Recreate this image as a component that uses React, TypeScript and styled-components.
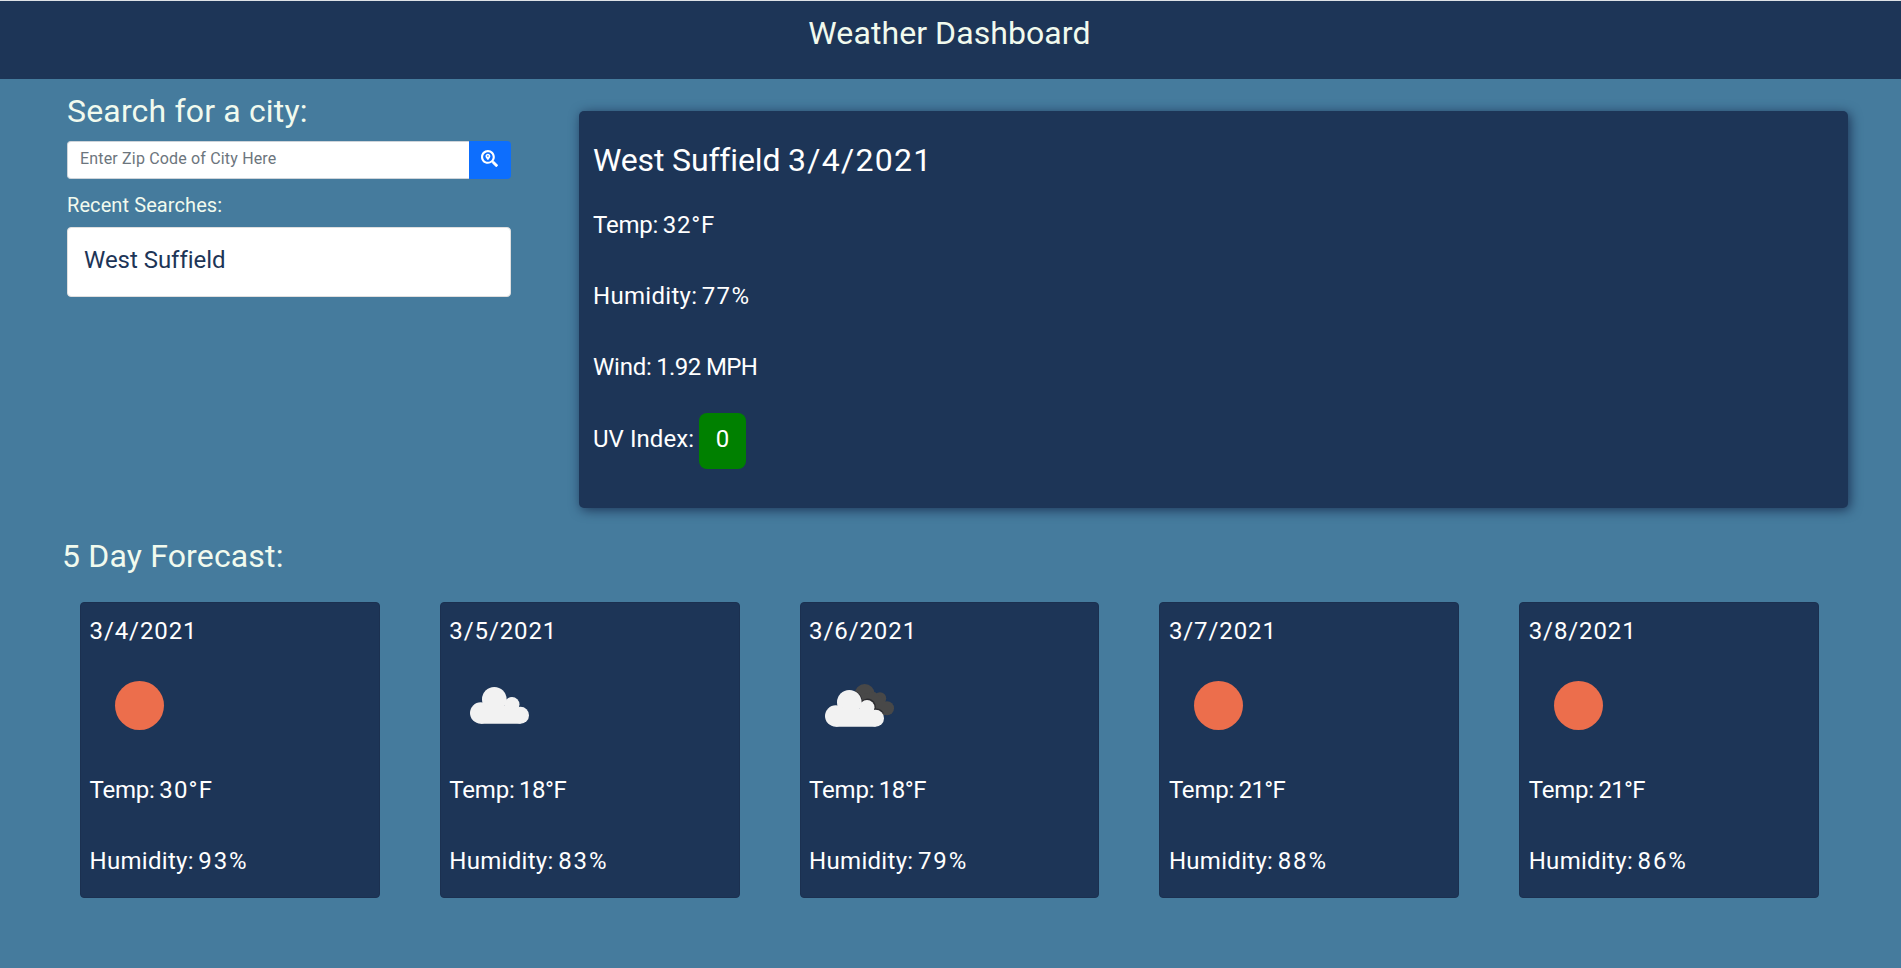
import React from 'react';
import styled, { createGlobalStyle } from 'styled-components';
import { FaSearchLocation } from 'react-icons/fa';

const GlobalStyle = createGlobalStyle`
  *, *::before, *::after { box-sizing: border-box; }
  body {
    margin: 0;
    background: #457b9d;
    color: #f1faee;
    font-family: Roboto, "Liberation Sans", sans-serif;
    font-size: 16px;
  }
  h1, h2, h3, p { margin: 0; font-weight: 400; }
`;

const Page = styled.div`
  min-height: 968px;
  display: flex;
  flex-direction: column;
`;

const Header = styled.header`
  height: 79px;
  padding: 12px 2px 0 0;
  border-top: 1px solid #dee2e6;
  background: #1d3557;
  text-align: center;
`;

const Heading = styled.h2<{ $tracking?: number }>`
  font-size: 32px;
  line-height: 40px;
  letter-spacing: ${(p) => p.$tracking ?? 0}px;
`;

const HeadingDate = styled.span`
  letter-spacing: 1.25px;
`;

const Main = styled.main`
  display: grid;
  grid-template-columns: 444px 1269px;
  column-gap: 68px;
  align-items: start;
  padding: 12px 53px 0 67px;
`;

const SearchForm = styled.form`
  display: flex;
  height: 38px;
  margin: 10px 0 14px;
`;

const SearchInput = styled.input`
  flex: 1;
  min-width: 0;
  padding: 0 12px 3px;
  border: 1px solid #ced4da;
  border-right: 0;
  border-radius: 4px 0 0 4px;
  background: #fff;
  font: inherit;
  letter-spacing: 0.17px;
  outline: 0;
  &::placeholder { color: #6c757d; opacity: 1; }
`;

const SearchButton = styled.button`
  display: flex;
  justify-content: center;
  width: 42px;
  padding: 9px 1px 0 0;
  border: 0;
  border-radius: 0 4px 4px 0;
  background: #0d6efd;
  color: #fff;
  font-size: 17px;
`;

const RecentTitle = styled.h3`
  font-size: 20px;
  line-height: 24px;
  letter-spacing: 0.09px;
`;

const RecentItem = styled.div`
  height: 70px;
  margin-top: 10px;
  padding: 14px 16px;
  border: 1px solid #dfdfdf;
  border-radius: 4px;
  background: #fff;
  color: #1d3557;
  font-size: 24px;
  line-height: 36px;
  letter-spacing: -0.03px;
`;

const CurrentCard = styled.section`
  height: 397px;
  margin-top: 20px;
  padding: 29px 14px 0;
  border-radius: 5px;
  background: #1d3557;
  box-shadow: 2px 2px 12px #1d3557;
  color: #fff;
`;

const CurrentStats = styled.div`
  display: grid;
  grid-auto-rows: 71.33px;
  margin-top: 9px;
`;

const StatRow = styled.p`
  display: flex;
  align-items: center;
  font-size: 24px;
  line-height: 36px;
  white-space: pre;
`;

const StatText = styled.span<{ $tracking?: number }>`
  letter-spacing: ${(p) => p.$tracking ?? 0}px;
  & + & { margin-left: 4.5px; }
`;

const UvBadge = styled.span`
  width: 47px;
  height: 56px;
  margin: 4px 0 0 5px;
  padding-top: 8px;
  border-radius: 8px;
  background: #008000;
  text-align: center;
`;

const ForecastSection = styled.section`
  padding: 28px 52px 0 50px;
`;

const ForecastTitle = styled(Heading)`
  padding-left: 12px;
`;

const ForecastGrid = styled.div`
  display: grid;
  grid-template-columns: repeat(5, 1fr);
  margin-top: 26px;
`;

const DayCard = styled.article`
  height: 296px;
  margin: 0 30px;
  padding: 10px 8px 0 8.5px;
  border: 1px solid #1b3050;
  border-radius: 4px;
  background: #1d3557;
  color: #fff;
`;

const DayDate = styled.p`
  font-size: 24px;
  line-height: 36px;
  letter-spacing: 0.9px;
`;

const WeatherIcon = styled.svg`
  display: block;
  width: 100px;
  height: 100px;
  margin-top: 7px;
`;

const DayStats = styled.div`
  display: grid;
  grid-auto-rows: 71px;
  margin-top: -2px;
`;

type Sky = 'clear' | 'cloudy' | 'broken';

const Cloud = () => (
  <>
    <circle cx="45.3" cy="43.3" r="12.3" />
    <circle cx="63" cy="48.5" r="7.5" />
    <circle cx="31.7" cy="57" r="10.7" />
    <circle cx="71.5" cy="59.2" r="8.5" />
    <path d="M31.7 50H65V54H71.5V67.7H31.7Z" />
  </>
);

const SkyIcon = ({ sky }: { sky: Sky }) => (
  <WeatherIcon viewBox="0 0 100 100">
    {sky === 'clear' && <circle cx="49.5" cy="49.5" r="24.5" fill="#ec6e4c" />}
    {sky === 'cloudy' && <g fill="#f2f2f2"><Cloud /></g>}
    {sky === 'broken' && (
      <>
        <g fill="#484848">
          <circle cx="55.7" cy="38" r="10" />
          <circle cx="71" cy="42.5" r="6.2" />
          <circle cx="78" cy="52.2" r="7" />
          <path d="M55 38L66 36L76 45V59H55Z" />
        </g>
        <g transform="translate(-5 3)">
          <path
            d="M51 32.8A12.4 12.4 0 0 1 57.8 43A7.6 7.6 0 0 1 70.6 50.6A8.6 8.6 0 0 1 79 54.5"
            fill="none"
            stroke="#2b2b2f"
            strokeWidth="1.8"
          />
          <g fill="#f2f2f2"><Cloud /></g>
        </g>
      </>
    )}
  </WeatherIcon>
);

interface StatProps {
  label: string;
  value: string;
  labelTracking?: number;
  valueTracking?: number;
}

const Stat = ({ label, value, labelTracking, valueTracking }: StatProps) => (
  <StatRow>
    <StatText $tracking={labelTracking}>{label}</StatText>
    <StatText $tracking={valueTracking}>{value}</StatText>
  </StatRow>
);

const days: { date: string; sky: Sky; temp: string; tempTracking: number; humidity: string }[] = [
  { date: '3/4/2021', sky: 'clear', temp: '30°F', tempTracking: 1.2, humidity: '93%' },
  { date: '3/5/2021', sky: 'cloudy', temp: '18°F', tempTracking: -0.5, humidity: '83%' },
  { date: '3/6/2021', sky: 'broken', temp: '18°F', tempTracking: -0.5, humidity: '79%' },
  { date: '3/7/2021', sky: 'clear', temp: '21°F', tempTracking: -0.7, humidity: '88%' },
  { date: '3/8/2021', sky: 'clear', temp: '21°F', tempTracking: -0.7, humidity: '86%' },
];

export default function App() {
  return (
    <Page>
      <GlobalStyle />
      <Header>
        <Heading as="h1" $tracking={0.08}>Weather Dashboard</Heading>
      </Header>
      <Main>
        <section>
          <Heading $tracking={0.17}>Search for a city:</Heading>
          <SearchForm onSubmit={(e) => e.preventDefault()}>
            <SearchInput placeholder="Enter Zip Code of City Here" />
            <SearchButton type="submit" aria-label="Search">
              <FaSearchLocation />
            </SearchButton>
          </SearchForm>
          <RecentTitle>Recent Searches:</RecentTitle>
          <RecentItem>West Suffield</RecentItem>
        </section>
        <CurrentCard>
          <Heading $tracking={-0.15}>
            West Suffield <HeadingDate>3/4/2021</HeadingDate>
          </Heading>
          <CurrentStats>
            <Stat label="Temp:" value="32°F" labelTracking={-0.2} valueTracking={0.8} />
            <Stat label="Humidity:" value="77%" labelTracking={0.3} valueTracking={1.3} />
            <Stat label="Wind:" value="1.92 MPH" labelTracking={-0.2} valueTracking={-0.6} />
            <StatRow>
              <StatText $tracking={0.05}>UV Index:</StatText>
              <UvBadge>0</UvBadge>
            </StatRow>
          </CurrentStats>
        </CurrentCard>
      </Main>
      <ForecastSection>
        <ForecastTitle $tracking={0.16}>5 Day Forecast:</ForecastTitle>
        <ForecastGrid>
          {days.map((day) => (
            <DayCard key={day.date}>
              <DayDate>{day.date}</DayDate>
              <SkyIcon sky={day.sky} />
              <DayStats>
                <Stat label="Temp:" value={day.temp} labelTracking={-0.2} valueTracking={day.tempTracking} />
                <Stat label="Humidity:" value={day.humidity} labelTracking={0.3} valueTracking={1.9} />
              </DayStats>
            </DayCard>
          ))}
        </ForecastGrid>
      </ForecastSection>
    </Page>
  );
}
